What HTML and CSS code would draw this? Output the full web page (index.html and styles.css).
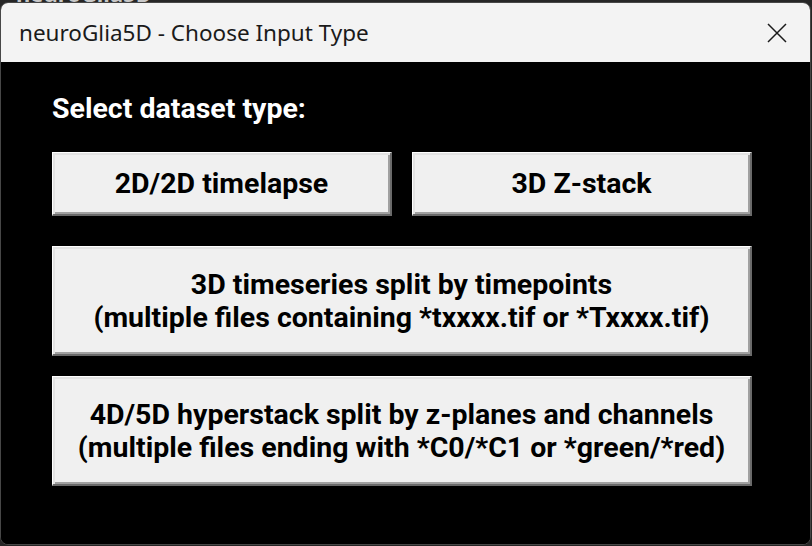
FILE: index.html
```html
<!DOCTYPE html>
<html>
<head>
<meta charset="utf-8">
<link rel="stylesheet" href="styles.css">
<title>neuroGlia5D - Choose Input Type</title>
</head>
<body>
<div class="desk-strip"><div class="desk-text">neuroGlia5D</div></div>
<div class="window">
  <div class="titlebar">
    <span class="title">neuroGlia5D - Choose Input Type</span>
    <svg class="close" width="20" height="20" viewBox="0 0 20 20" aria-label="Close">
      <path d="M1 1 L19 19 M19 1 L1 19" stroke="#1b1b1b" stroke-width="1.5" fill="none"/>
    </svg>
  </div>
  <div class="content">
    <div class="label">Select dataset type:</div>
    <div class="choices">
      <div class="row">
        <button class="btn short">2D/2D timelapse</button>
        <button class="btn short">3D Z-stack</button>
      </div>
      <button class="btn tall">3D timeseries split by timepoints<br>(multiple files containing *txxxx.tif or *Txxxx.tif)</button>
      <button class="btn tall">4D/5D hyperstack split by z-planes and channels<br>(multiple files ending with *C0/*C1 or *green/*red)</button>
    </div>
  </div>
</div>
</body>
</html>
```
FILE: styles.css
```css
html, body {
  margin: 0;
  padding: 0;
}
body {
  width: 812px;
  height: 546px;
  overflow: hidden;
  background: #262626;
}
.desk-strip {
  height: 2px;
  overflow: hidden;
  padding-left: 16px;
}
.desk-text {
  margin-top: -17px;
  font-family: "Noto Sans", sans-serif;
  font-weight: bold;
  font-size: 22px;
  line-height: 20px;
  color: #c8c8c8;
}
.window {
  width: 811px;
  height: 543px;
  box-sizing: border-box;
  border: 1px solid #474747;
  border-radius: 8px;
  overflow: hidden;
  display: flex;
  flex-direction: column;
  background: #000;
}
.titlebar {
  height: 59px;
  flex: none;
  background: #f3f3f3;
  display: flex;
  align-items: center;
  padding-left: 18px;
  padding-right: 23px;
}
.title {
  font-family: "Noto Sans", "Open Sans", sans-serif;
  font-size: 22.5px;
  color: #1a1a1a;
  padding-bottom: 1px;
}
.close {
  margin-left: auto;
  display: block;
}
.content {
  flex: 1;
  background: #000;
  padding: 30px 0 0 51px;
}
.label {
  font-family: Roboto, "Liberation Sans", sans-serif;
  font-weight: bold;
  font-size: 28.5px;
  line-height: 34px;
  color: #ffffff;
}
.choices {
  margin-top: 26px;
  width: 700px;
  display: flex;
  flex-direction: column;
}
.row {
  display: flex;
  gap: 20px;
  margin-bottom: 30px;
}
.btn {
  display: block;
  box-sizing: border-box;
  margin: 0;
  padding: 0;
  font-family: Roboto, "Liberation Sans", sans-serif;
  font-weight: bold;
  font-size: 28.5px;
  line-height: 33px;
  color: #000;
  text-align: center;
  background: #f0f0f0;
  border-style: solid;
  border-width: 1px 2px 2px 1px;
  border-color: #ffffff #6a6a6a #6a6a6a #ffffff;
  box-shadow: inset 2px 2px 0 #e3e3e3, inset -2px -2px 0 #a0a0a0;
  border-radius: 0;
}
.short {
  flex: 1;
  height: 64px;
}
.tall {
  width: 700px;
  height: 110px;
  margin-bottom: 20px;
}
```
